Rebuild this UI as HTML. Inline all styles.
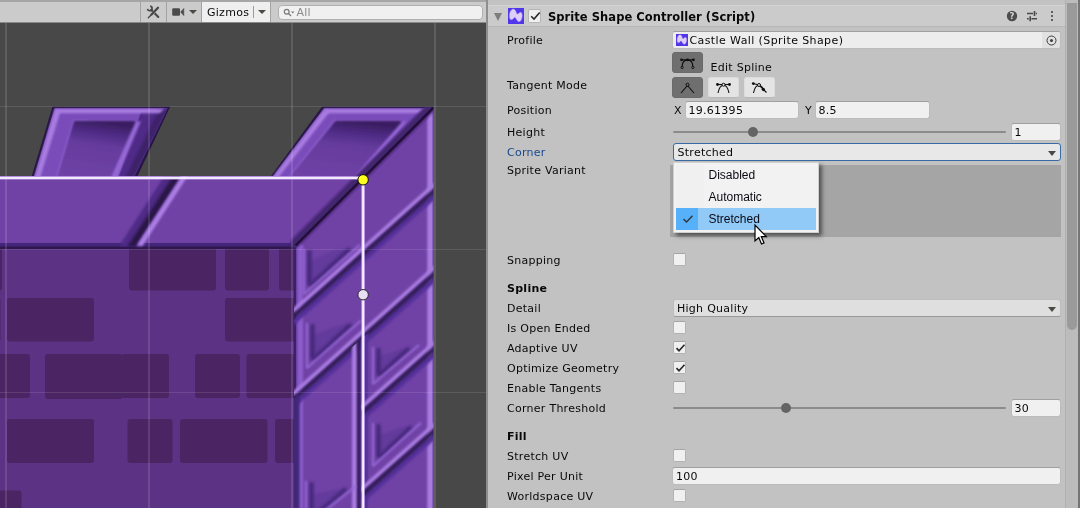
<!DOCTYPE html>
<html lang="en">
<head>
<meta charset="utf-8">
<title>Sprite Shape Controller</title>
<style>
*{box-sizing:border-box;margin:0;padding:0}
html,body{width:1080px;height:508px;overflow:hidden;background:#c2c2c2}
body{position:relative;font-family:"DejaVu Sans","Liberation Sans",sans-serif;font-size:11px;color:#090909;letter-spacing:0.27px;line-height:14px}
.abs{position:absolute}
/* left : scene view */
#left{will-change:transform;position:absolute;left:0;top:0;width:486px;height:508px;background:#484848;overflow:hidden}
#tbtop{position:absolute;left:0;top:0;width:486px;height:2px;background:#a6a6a6}
#toolbar{position:absolute;left:0;top:2px;width:486px;height:21px;background:#cbcbcb;border-bottom:1px solid #898989}
.sep{position:absolute;top:0;width:1px;height:20px;background:#a3a3a3}
#gizmos{position:absolute;left:202px;top:0;width:68px;height:20px;background:#efefef}
#gizmos span{position:absolute;left:5px;top:4px}
#search{position:absolute;left:278px;top:3px;width:205px;height:15px;background:#f0f0f0;border:1px solid #b0b0b0;border-radius:4px}
#search span{position:absolute;left:17.5px;top:0px;color:#8a8a8a;line-height:13px}
svg.scene{position:absolute;left:0;top:22px}
/* splitter */
#split{position:absolute;left:486px;top:0;width:2px;height:508px;background:#8e8e8e}
/* inspector */
#insp{will-change:transform;position:absolute;left:488px;top:0;width:592px;height:508px;background:#c2c2c2}
#hdr{position:absolute;left:0;top:5px;width:578px;height:22px;background:#cbcbcb;border-top:1px solid #d3d3d3;border-bottom:1px solid #b7b7b7}
.lbl{position:absolute;left:19px;white-space:nowrap;margin-top:1px}
.b{font-weight:bold}
.field{position:absolute;background:#f0f0f0;border:1px solid #bcbcbc;border-top-color:#a0a0a0;border-radius:3px;height:18px;line-height:18px;padding-left:3px;white-space:nowrap;overflow:hidden}
.cb{position:absolute;left:185px;width:13px;height:13px;background:#f0f0f0;border:1px solid #b2b2b2;border-top-color:#a5a5a5;border-radius:2px}
.track{position:absolute;left:185px;width:333px;height:2px;background:#8b8b8b;border-radius:1px}
.knob{position:absolute;width:10px;height:10px;border-radius:5px;background:#646464}
.btn{position:absolute;height:21px;width:31px;border-radius:3px}
.btn.dark{background:#6f6f6f;border:1px solid #6a6a6a}
.btn.light{background:#e4e4e4;border:1px solid #dcdcdc;border-bottom-color:#b9b9b9}
.drop{position:absolute;left:185px;width:388px;height:18px;background:#dfdfdf;border:1px solid #bdbdbd;border-bottom-color:#999;border-radius:3px;line-height:17px;padding-left:3px}
.arrow{position:absolute;width:0;height:0;border-left:4px solid transparent;border-right:4px solid transparent;border-top:5px solid #4a4a45}
.arrow.a4{border-left-width:4px;border-right-width:4px;border-top-width:4px}
/* popup */
#menu{position:absolute;left:185px;top:161.5px;width:146px;height:71px;background:#f2f2f2;border:1px solid #cfcfcf;box-shadow:3px 3px 4px rgba(0,0,0,0.5);font-family:"Liberation Sans",sans-serif;font-size:12px;letter-spacing:0;color:#0a0a14}
#menu .gut{position:absolute;left:2px;top:2px;width:28px;height:65px;background:#f0f0f0}
#menu .it{position:absolute;left:34.5px;line-height:14px}
#menu .sel{position:absolute;left:2px;top:45.5px;width:140px;height:22px;background:#91c9f7}
#menu .selchk{position:absolute;left:2px;top:45.5px;width:22px;height:22px;background:#56b0fa}
</style>
</head>
<body>
<div id="left">
<svg class="scene" width="486" height="486" viewBox="0 22 486 486">
<defs>
<filter id="b1" filterUnits="userSpaceOnUse" x="-10" y="0" width="520" height="540"><feGaussianBlur stdDeviation="0.9"/></filter>
<filter id="b2" filterUnits="userSpaceOnUse" x="-10" y="0" width="520" height="540"><feGaussianBlur stdDeviation="1.8"/></filter>
<filter id="bs" filterUnits="userSpaceOnUse" x="-10" y="0" width="520" height="540"><feGaussianBlur stdDeviation="0.55"/></filter>
<linearGradient id="rec" x1="0.55" y1="0" x2="0.35" y2="1"><stop offset="0" stop-color="#3a1e62"/><stop offset="0.18" stop-color="#4e2b84"/><stop offset="0.4" stop-color="#653b9d"/><stop offset="1" stop-color="#6f42a6"/></linearGradient>
<linearGradient id="recL" x1="0" y1="0" x2="1" y2="0"><stop offset="0" stop-color="#4a2a80"/><stop offset="0.5" stop-color="#6a3da0"/><stop offset="1" stop-color="#7042a6"/></linearGradient>
<clipPath id="colclip"><polygon points="433.5,106.5 433.5,510 294,510 294,243.5"/></clipPath>
<clipPath id="beamclip"><polygon points="-2,176 362,176 294,243.5 294,249 -2,249"/></clipPath>
</defs>
<rect x="0" y="22" width="486" height="486" fill="#484848"/>
<rect x="0" y="240" width="300" height="270" fill="#5c3285"/>
<rect x="129.0" y="245.0" width="87.0" height="45.5" rx="3" fill="#4b2463"/>
<rect x="225.0" y="245.0" width="44.0" height="45.5" rx="3" fill="#4b2463"/>
<rect x="279.0" y="245.0" width="17.0" height="45.5" rx="3" fill="#4b2463"/>
<rect x="-5.0" y="245.0" width="7.0" height="45.5" rx="3" fill="#4b2463"/>
<rect x="7.0" y="298.0" width="87.0" height="43.5" rx="3" fill="#4b2463"/>
<rect x="225.0" y="298.0" width="71.0" height="43.5" rx="3" fill="#4b2463"/>
<rect x="-5.0" y="298.0" width="5.5" height="43.5" rx="3" fill="#4b2463"/>
<rect x="-5.0" y="354.0" width="35.0" height="44.0" rx="3" fill="#4b2463"/>
<rect x="45.0" y="354.0" width="78.0" height="45.0" rx="3" fill="#4b2463"/>
<rect x="122.0" y="354.0" width="47.0" height="44.0" rx="3" fill="#4b2463"/>
<rect x="195.0" y="354.0" width="45.0" height="44.0" rx="3" fill="#4b2463"/>
<rect x="246.5" y="354.0" width="49.5" height="44.0" rx="3" fill="#4b2463"/>
<rect x="7.0" y="419.0" width="87.0" height="44.0" rx="3" fill="#4b2463"/>
<rect x="127.5" y="419.0" width="45.0" height="44.0" rx="3" fill="#4b2463"/>
<rect x="180.0" y="419.0" width="87.5" height="44.0" rx="3" fill="#4b2463"/>
<rect x="275.0" y="419.0" width="21.0" height="44.0" rx="3" fill="#4b2463"/>
<rect x="-5.0" y="490.5" width="26.5" height="49.5" rx="3" fill="#4b2463"/>
<polygon points="52.5,106.7 170.1,106.7 136.1,179.0 30.9,179.0" fill="#261243" filter="url(#bs)"/>
<polygon points="54.5,108.3 167.5,108.3 133.5,178.0 33.5,178.0" fill="#794cba" />
<polygon points="141.0,112.0 167.5,108.3 133.5,178.0 118.0,178.0" fill="#4f2c87" filter="url(#bs)"/>
<polygon points="158.5,110.3 167.0,108.8 133.0,178.0 125.5,178.0" fill="#3c2169" filter="url(#b1)"/>
<polygon points="55.5,109.1 164.5,109.1 159.5,113.3 56.5,113.3" fill="#a87be0" filter="url(#b1)"/>
<polygon points="55.0,109.3 60.5,111.3 40.0,178.0 34.5,178.0" fill="#a87be0" filter="url(#b1)"/>
<polyline points="57.0,178.0 74.0,121.0 135.0,121.0" fill="none" stroke="#9a6cd8" stroke-width="2" stroke-linejoin="round" filter="url(#b1)"/>
<polygon points="135.0,122.0 141.0,121.0 117.0,178.0 110.0,178.0" fill="#9468d4" filter="url(#b1)"/>
<polygon points="75.0,122.0 134.0,122.0 109.0,178.0 58.0,178.0" fill="url(#rec)" filter="url(#b1)" stroke="url(#rec)" stroke-width="2.500" stroke-linejoin="round"/>
<g clip-path="url(#cmclip)">
<clipPath id="cmclip"><polygon points="260,100 436,100 433.5,106.5 360.5,178 260,178"/></clipPath>
<polygon points="322.0,106.7 442.6,106.7 374.6,179.0 268.9,179.0" fill="#261243" filter="url(#bs)"/>
<polygon points="324.0,108.3 440.0,108.3 372.0,178.0 271.5,178.0" fill="#794cba" />
<polygon points="325.0,109.1 437.0,109.1 432.0,113.3 326.0,113.3" fill="#a87be0" filter="url(#b1)"/>
<polygon points="324.5,109.3 330.0,111.3 278.0,178.0 272.5,178.0" fill="#a87be0" filter="url(#b1)"/>
<polyline points="289.0,178.0 335.0,121.0 401.0,121.0" fill="none" stroke="#9a6cd8" stroke-width="2" stroke-linejoin="round" filter="url(#b1)"/>
<polygon points="401.0,122.0 407.0,121.0 359.0,178.0 352.0,178.0" fill="#9468d4" filter="url(#b1)"/>
<polygon points="336.0,122.0 400.0,122.0 351.0,178.0 290.0,178.0" fill="url(#rec)" filter="url(#b1)" stroke="url(#rec)" stroke-width="2.500" stroke-linejoin="round"/>
</g>
<g clip-path="url(#beamclip)">
<rect x="-2" y="176" width="370" height="74" fill="#7042a6"/>
<rect x="-2" y="243" width="370" height="6" fill="#43257a"/>
<rect x="-2" y="246.5" width="370" height="2.5" fill="#30184f"/>
<polygon points="164.3,176.0 174.3,176.0 129.1,246.0 119.1,246.0" fill="#4f2c86" filter="url(#b1)"/>
<polygon points="172.8,176.0 181.3,176.0 136.1,246.0 127.6,246.0" fill="#2a1548" filter="url(#b1)"/>
<polygon points="181.8,176.0 187.8,176.0 142.6,246.0 136.6,246.0" fill="#ab7ee4" filter="url(#b1)"/>
</g>
<g clip-path="url(#colclip)">
<rect x="290" y="100" width="146" height="420" fill="#7042a6"/>
<rect x="293" y="240" width="3.2" height="270" fill="#3a1f66"/>
<rect x="297.5" y="244" width="5.5" height="270" fill="#9163d2" filter="url(#b1)" opacity="0.85"/>
<rect x="427.3" y="100" width="6.5" height="420" fill="#a87be0" filter="url(#b1)"/>
<rect x="432.6" y="100" width="1.2" height="420" fill="#5a3394" opacity="0.8"/>
<polygon points="308.0,262.0 308.0,288.0 354.0,247.5 335.6,249.5" fill="#643a9c" filter="url(#b2)"/>
<line x1="309.5" y1="250.0" x2="309.5" y2="285.0" stroke="#43257a" stroke-width="4.2" filter="url(#b2)"/>
<line x1="310.0" y1="285.5" x2="350.0" y2="248.5" stroke="#45267c" stroke-width="4.0" filter="url(#b2)"/>
<line x1="304.0" y1="249.0" x2="304.0" y2="294.0" stroke="#9669d6" stroke-width="2.0" filter="url(#b1)"/>
<line x1="304.0" y1="294.0" x2="360.0" y2="244.7" stroke="#9669d6" stroke-width="2.0" filter="url(#b1)"/>
<line x1="444.8" y1="187.2" x2="287.9" y2="327.2" stroke="#55309a" stroke-width="5.0" filter="url(#b1)"/>
<line x1="439.1" y1="180.8" x2="282.2" y2="320.8" stroke="#a87be0" stroke-width="4.4" filter="url(#b1)"/>
<line x1="442.0" y1="184.0" x2="285.0" y2="324.0" stroke="#321a58" stroke-width="4.4" filter="url(#b1)"/>
<polygon points="311.0,336.0 311.0,362.0 355.0,323.3 337.4,325.3" fill="#643a9c" filter="url(#b2)"/>
<line x1="312.5" y1="324.0" x2="312.5" y2="359.0" stroke="#43257a" stroke-width="4.2" filter="url(#b2)"/>
<line x1="313.0" y1="359.5" x2="351.0" y2="324.3" stroke="#45267c" stroke-width="4.0" filter="url(#b2)"/>
<line x1="307.0" y1="323.0" x2="307.0" y2="368.0" stroke="#9669d6" stroke-width="2.0" filter="url(#b1)"/>
<line x1="307.0" y1="368.0" x2="361.0" y2="320.5" stroke="#9669d6" stroke-width="2.0" filter="url(#b1)"/>
<line x1="444.8" y1="270.2" x2="287.9" y2="410.2" stroke="#55309a" stroke-width="5.0" filter="url(#b1)"/>
<line x1="439.1" y1="263.8" x2="282.2" y2="403.8" stroke="#a87be0" stroke-width="4.4" filter="url(#b1)"/>
<line x1="442.0" y1="267.0" x2="285.0" y2="407.0" stroke="#321a58" stroke-width="4.4" filter="url(#b1)"/>
<clipPath id="lowclip"><polygon points="294,399 363,337.500 433,275 433,510 294,510"/></clipPath>
<g clip-path="url(#lowclip)">
<rect x="292" y="300" width="7.500" height="220" fill="#43257a" filter="url(#b1)"/>
<rect x="352" y="300" width="5" height="220" fill="#a87be0" filter="url(#b1)"/>
<rect x="357.2" y="300" width="3.6" height="220" fill="#321a58" filter="url(#b1)"/>
<rect x="361" y="300" width="7" height="220" fill="#55309a" filter="url(#b1)"/>
</g>
<clipPath id="rhalf"><rect x="361" y="250" width="73" height="260"/></clipPath>
<g clip-path="url(#rhalf)">
<polygon points="377.0,357.2 377.0,378.0 413.0,347.4 398.6,349.4" fill="#643a9c" filter="url(#b2)"/>
<line x1="378.5" y1="348.0" x2="378.5" y2="375.0" stroke="#43257a" stroke-width="4.2" filter="url(#b2)"/>
<line x1="379.0" y1="375.5" x2="409.0" y2="348.3" stroke="#45267c" stroke-width="4.0" filter="url(#b2)"/>
<line x1="373.0" y1="347.0" x2="373.0" y2="384.0" stroke="#9669d6" stroke-width="2.0" filter="url(#b1)"/>
<line x1="373.0" y1="384.0" x2="419.0" y2="344.9" stroke="#9669d6" stroke-width="2.0" filter="url(#b1)"/>
<line x1="444.8" y1="345.3" x2="356.9" y2="423.2" stroke="#55309a" stroke-width="5.0" filter="url(#b1)"/>
<line x1="439.1" y1="338.8" x2="351.2" y2="416.7" stroke="#a87be0" stroke-width="4.4" filter="url(#b1)"/>
<line x1="442.0" y1="342.0" x2="354.0" y2="420.0" stroke="#321a58" stroke-width="4.4" filter="url(#b1)"/>
<polygon points="377.0,435.3 377.0,460.0 415.0,425.8 399.8,427.8" fill="#643a9c" filter="url(#b2)"/>
<line x1="378.5" y1="424.0" x2="378.5" y2="457.0" stroke="#43257a" stroke-width="4.2" filter="url(#b2)"/>
<line x1="379.0" y1="457.5" x2="411.0" y2="426.9" stroke="#45267c" stroke-width="4.0" filter="url(#b2)"/>
<line x1="373.0" y1="423.0" x2="373.0" y2="466.0" stroke="#9669d6" stroke-width="2.0" filter="url(#b1)"/>
<line x1="373.0" y1="466.0" x2="421.0" y2="422.8" stroke="#9669d6" stroke-width="2.0" filter="url(#b1)"/>
<line x1="444.8" y1="427.3" x2="356.9" y2="505.2" stroke="#55309a" stroke-width="5.0" filter="url(#b1)"/>
<line x1="439.1" y1="420.8" x2="351.2" y2="498.7" stroke="#a87be0" stroke-width="4.4" filter="url(#b1)"/>
<line x1="442.0" y1="424.0" x2="354.0" y2="502.0" stroke="#321a58" stroke-width="4.4" filter="url(#b1)"/>
</g>
<clipPath id="lhalf"><rect x="294" y="380" width="64.500" height="130"/></clipPath>
<g clip-path="url(#lhalf)">
<polygon points="310.0,494.0 310.0,520.0 350.0,488.0 334.0,490.0" fill="#643a9c" filter="url(#b2)"/>
<line x1="311.5" y1="482.0" x2="311.5" y2="517.0" stroke="#43257a" stroke-width="4.2" filter="url(#b2)"/>
<line x1="312.0" y1="517.5" x2="346.0" y2="488.7" stroke="#45267c" stroke-width="4.0" filter="url(#b2)"/>
<line x1="306.0" y1="481.0" x2="306.0" y2="526.0" stroke="#9669d6" stroke-width="2.0" filter="url(#b1)"/>
<line x1="306.0" y1="526.0" x2="356.0" y2="486.0" stroke="#9669d6" stroke-width="2.0" filter="url(#b1)"/>
</g>
</g>
<clipPath id="spclip"><rect x="0" y="107" width="433.500" height="420"/></clipPath><g clip-path="url(#spclip)">
<line x1="443.6" y1="94.6" x2="295.1" y2="243.1" stroke="#43256f" stroke-width="9.5" filter="url(#b1)" stroke-linecap="round"/>
<line x1="445.0" y1="96.0" x2="295.5" y2="245.5" stroke="#221038" stroke-width="2.4" filter="url(#bs)"/>
</g>
<rect x="5.0" y="22" width="2" height="486" fill="#fff" opacity="0.12"/>
<rect x="148.0" y="22" width="2" height="486" fill="#fff" opacity="0.12"/>
<rect x="291.0" y="22" width="2" height="486" fill="#fff" opacity="0.12"/>
<rect x="434.0" y="22" width="2" height="486" fill="#fff" opacity="0.12"/>
<rect x="0" y="106.0" width="486" height="1" fill="#fff" opacity="0.11"/>
<rect x="0" y="249.0" width="486" height="1" fill="#fff" opacity="0.11"/>
<rect x="0" y="392.0" width="486" height="1" fill="#fff" opacity="0.11"/>
<g filter="url(#b0)">
<filter id="b0"><feGaussianBlur stdDeviation="0.45"/></filter>
<path d="M-2 177.9 H363.1 V512" fill="none" stroke="#dcbcff" stroke-width="3.4" opacity="0.85"/>
<path d="M-2 177.9 H363.1 V512" fill="none" stroke="#ffffff" stroke-width="1.5"/>
</g>
<circle cx="363.1" cy="179.8" r="5.2" fill="#ffff1e" stroke="#0a0a0a" stroke-width="1"/>
<circle cx="363.1" cy="294.7" r="5.2" fill="#e8def6" stroke="#2b2b2b" stroke-width="1"/>
</svg>
<div id="tbtop"></div>
<div id="toolbar">
  <div class="sep" style="left:140px"></div>
  <div class="sep" style="left:166px"></div>
  <div class="sep" style="left:201px"></div>
  <div id="gizmos"><span>Gizmos</span>
    <div class="abs" style="left:51px;top:4px;width:1px;height:12px;background:#9a9a9a"></div>
    <div class="arrow a4" style="left:55.500px;top:8px"></div>
  </div>
  <div class="sep" style="left:270px"></div>
  <!-- tools icon -->
  <svg class="abs" style="left:145px;top:3px" width="16" height="16" viewBox="0 0 16 16"><g stroke="#484848" fill="none"><path d="M6.200 4.800 L13.300 12" stroke-width="2.100" stroke-linecap="round"/><path d="M5.200 1.200 A2.300 2.300 0 1 1 2.500 3.900" stroke-width="1.700"/><path d="M13.100 2.700 L6.800 9.300" stroke-width="2.500" stroke="#cbcbcb" /><path d="M13 2.800 L6.500 9.500" stroke-width="2.300" stroke-linecap="round"/><path d="M6.800 9.200 L3.300 12.700" stroke-width="1.300" stroke-linecap="round"/></g></svg>
  <!-- camera icon -->
  <svg class="abs" style="left:172px;top:6px" width="14" height="9" viewBox="0 0 14 9"><rect x="0.200" y="0.300" width="7.800" height="7.500" rx="1.200" fill="#4b4b4b"/><path d="M8.600 4 L11.800 0.500 V7.600 Z" fill="#4b4b4b" stroke="#4b4b4b" stroke-width="0.600" stroke-linejoin="round"/></svg>
  <div class="arrow a4" style="left:189px;top:8px"></div>
  <div id="search"><svg class="abs" style="left:3.5px;top:2px" width="12" height="10" viewBox="0 0 12 10"><circle cx="3.7" cy="3.7" r="2.4" fill="none" stroke="#7a7a7a" stroke-width="1.2"/><path d="M5.5 5.5 L8 8" stroke="#7a7a7a" stroke-width="1.3"/><path d="M8 3.5 h3.4 l-1.7 2z" fill="#7a7a7a"/></svg><span>All</span></div>
</div>
</div>
<div id="split"></div>
<div id="insp">
  <div id="hdr"></div>
  <!-- scrollbar -->
  <div class="abs" style="left:577px;top:0;width:1px;height:508px;background:#b0b0b0"></div>
  <div class="abs" style="left:578px;top:0;width:12px;height:508px;background:#bcbcbc"></div>
  <div class="abs" style="left:579px;top:3px;width:10px;height:327px;background:#9a9a9a;border-radius:0 0 5px 5px"></div>
  <div class="abs" style="left:590px;top:0;width:2px;height:508px;background:#757575"></div>

  <!-- header -->
  <div class="abs" style="left:6px;top:13px;width:0;height:0;border-left:4.5px solid transparent;border-right:4.5px solid transparent;border-top:8px solid #7e7e7e"></div>
  <svg class="abs" style="left:20px;top:8px" width="16" height="16" viewBox="0 0 16 16"><rect width="16" height="16" fill="#5237ea"/><path d="M1.400 7 C1.600 3.500 3.800 0.800 5.400 1 C6.600 1.100 7.400 2.200 7.900 3.300 C8.400 4.600 8.700 6.100 9.600 6.100 C10.400 6.100 11.300 4.200 12.600 4.300 C14.200 4.500 14.500 7 14.200 8.800 C13.800 11.500 12.600 13.900 11 13.700 C9.600 13.500 8.800 12 8.200 10.900 C7.700 10 7.200 9.300 6.500 9.400 C5.600 9.500 4.900 11.900 3.400 11.800 C2 11.700 1.200 9.800 1.400 7Z" fill="#ddcff8" stroke="#9c86f0" stroke-width="0.500"/></svg>
  <div class="abs" style="left:40px;top:9px;width:13px;height:14px;background:#f1f1f1;border:1px solid #b5b5b5;border-radius:2px"></div>
  <svg class="abs" style="left:41.500px;top:11px" width="11" height="10" viewBox="0 0 11 10"><path d="M1.2 5.2 L4 8 L9.7 1.5" fill="none" stroke="#2b2b2b" stroke-width="1.6"/></svg>
  <div class="lbl b" style="left:60px;top:8.500px;font-size:11.5px;letter-spacing:0.05px">Sprite Shape Controller (Script)</div>
  <!-- header icons -->
  <svg class="abs" style="left:518px;top:10px" width="12" height="12" viewBox="0 0 12 12"><circle cx="6" cy="6" r="5.2" fill="#4d4d4d"/><text x="6" y="9.300" font-family="DejaVu Sans, sans-serif" font-weight="bold" font-size="8.500" fill="#d4d4d4" text-anchor="middle">?</text></svg>
  <svg class="abs" style="left:538px;top:10px" width="12" height="12" viewBox="0 0 12 12"><g stroke="#4a4a4a" stroke-width="1.600" fill="none"><path d="M1 3.500H7.200M9.800 3.500H11"/><path d="M8.500 1V6"/><path d="M1 8.700H2.800M5.400 8.700H11"/><path d="M4.200 6.200V11.200"/></g></svg>
  <div class="abs" style="left:562.700px;top:10.600px;width:2.600px;height:2.600px;border-radius:0.800px;background:#4a4a4a"></div>
  <div class="abs" style="left:562.700px;top:14.700px;width:2.600px;height:2.600px;border-radius:0.800px;background:#4a4a4a"></div>
  <div class="abs" style="left:562.700px;top:18.800px;width:2.600px;height:2.600px;border-radius:0.800px;background:#4a4a4a"></div>

  <!-- Profile -->
  <div class="lbl" style="top:33px">Profile</div>
  <div class="field" style="left:184px;top:31px;width:389px;padding-left:16.500px;letter-spacing:0.4px;background:#ededed">Castle Wall (Sprite Shape)
    <div class="abs" style="right:0;top:0;width:18px;height:16px;background:#e1e1e1"></div>
    <svg class="abs" style="right:3.500px;top:2.500px" width="11" height="11" viewBox="0 0 11 11"><circle cx="5.5" cy="5.5" r="4.500" fill="none" stroke="#3e3e3e" stroke-width="1"/><circle cx="5.5" cy="5.5" r="1.5" fill="#3e3e3e"/></svg>
  </div>
  <svg class="abs" style="left:188px;top:34px" width="12" height="12" viewBox="0 0 16 16"><rect width="16" height="16" fill="#5237ea"/><path d="M1.400 7 C1.600 3.500 3.800 0.800 5.400 1 C6.600 1.100 7.400 2.200 7.900 3.300 C8.400 4.600 8.700 6.100 9.600 6.100 C10.400 6.100 11.300 4.200 12.600 4.300 C14.200 4.500 14.500 7 14.200 8.800 C13.800 11.500 12.600 13.900 11 13.700 C9.600 13.500 8.800 12 8.200 10.900 C7.700 10 7.200 9.300 6.500 9.400 C5.600 9.500 4.900 11.900 3.400 11.800 C2 11.700 1.200 9.800 1.400 7Z" fill="#ddcff8" stroke="#9c86f0" stroke-width="0.500"/></svg>

  <!-- Edit spline -->
  <div class="btn dark" style="left:184px;top:52px"></div>
  <svg class="abs" style="left:190.700px;top:57px" width="17" height="12.500" viewBox="0 0 19 14"><g fill="none" stroke="#0d0d0d" stroke-width="1.2"><path d="M3.500 11.500 C3.500 6 6 3.200 9.500 3.200 C13 3.200 15.500 6 15.500 11.500"/><path d="M3 3.200H16"/></g><circle cx="2.800" cy="3.200" r="1.500" fill="#0d0d0d"/><circle cx="9.500" cy="3.200" r="1.600" fill="#0d0d0d"/><circle cx="16.200" cy="3.200" r="1.500" fill="#0d0d0d"/><circle cx="3.500" cy="11.700" r="1.300" fill="#6f6f6f" stroke="#0d0d0d"/><circle cx="15.500" cy="11.700" r="1.300" fill="#6f6f6f" stroke="#0d0d0d"/></svg>
  <div class="lbl" style="left:222.500px;top:59.500px">Edit Spline</div>

  <!-- Tangent mode -->
  <div class="lbl" style="top:78px">Tangent Mode</div>
  <div class="btn dark" style="left:184px;top:77px"></div>
  <div class="btn light" style="left:220px;top:77px"></div>
  <div class="btn light" style="left:256px;top:77px"></div>
  <svg class="abs" style="left:190.500px;top:81px" width="17" height="14" viewBox="0 0 17 14"><path d="M2 12 L8.500 4.500 L15 12" fill="none" stroke="#0d0d0d" stroke-width="1.100"/><circle cx="8.500" cy="3.700" r="1.500" fill="#6f6f6f" stroke="#0d0d0d"/></svg>
  <svg class="abs" style="left:226.500px;top:81px" width="17" height="14" viewBox="0 0 17 14"><g fill="none" stroke="#0d0d0d" stroke-width="1.100"><path d="M3 12 C4 7 6 4.200 8.500 4.200 C11 4.200 13 7 14 12"/><path d="M2.500 3.500 H14.500"/></g><circle cx="2.500" cy="3.500" r="1.400" fill="#0d0d0d"/><circle cx="14.500" cy="3.500" r="1.400" fill="#0d0d0d"/><circle cx="8.500" cy="3.700" r="1.500" fill="#e4e4e4" stroke="#0d0d0d"/></svg>
  <svg class="abs" style="left:262.500px;top:81px" width="17" height="14" viewBox="0 0 17 14"><g fill="none" stroke="#0d0d0d" stroke-width="1.100"><path d="M2.500 12 C3.500 7 5.500 4.200 8 4.200 C10.500 4.200 12 7 13 10"/><path d="M2 2.500 L8 4 L15.500 11.500"/></g><circle cx="2.300" cy="2.600" r="1.400" fill="#0d0d0d"/><circle cx="12.300" cy="8.300" r="1.600" fill="#0d0d0d"/><circle cx="8" cy="4" r="1.500" fill="#e4e4e4" stroke="#0d0d0d"/></svg>

  <!-- Position -->
  <div class="lbl" style="top:103px">Position</div>
  <div class="lbl" style="left:186px;top:103px">X</div>
  <div class="field" style="left:196.5px;top:101px;width:114.5px">19.61395</div>
  <div class="lbl" style="left:317px;top:103px">Y</div>
  <div class="field" style="left:326.5px;top:101px;width:115px">8.5</div>

  <!-- Height -->
  <div class="lbl" style="top:125px">Height</div>
  <div class="track" style="top:131px"></div>
  <div class="knob" style="left:260px;top:127px"></div>
  <div class="field" style="left:522.5px;top:123px;width:50px">1</div>

  <!-- Corner -->
  <div class="lbl" style="top:145px;color:#17488f">Corner</div>
  <div class="drop" style="top:143px;height:18px;background:#e8e8e8;border:1px solid #3a6aa3;padding-left:3.500px">Stretched<div class="arrow" style="left:374px;top:6.500px"></div></div>

  <!-- Sprite Variant -->
  <div class="lbl" style="top:163px">Sprite Variant</div>
  <div class="abs" style="left:182px;top:165px;width:391px;height:71.5px;background:#a5a5a5"></div>

  <!-- popup menu -->
  <div id="menu">
    <div class="gut"></div>
    <div class="sel"></div><div class="selchk"></div>
    <div class="it" style="top:5.500px">Disabled</div>
    <div class="it" style="top:27.500px">Automatic</div>
    <div class="it" style="top:49.500px">Stretched</div>
    <svg class="abs" style="left:8px;top:51px" width="12" height="10" viewBox="0 0 12 10"><path d="M1.500 5 L4.500 8 L10.500 1.800" fill="none" stroke="#333" stroke-width="1.300"/></svg>
  </div>
  <!-- cursor -->
  <svg class="abs" style="left:266px;top:224px" width="14" height="22" viewBox="0 0 14 22"><path d="M1 1 V17 L4.800 13.500 L7.500 20 L10 19 L7.300 12.600 H12.300 Z" fill="#fff" stroke="#000" stroke-width="1.200" stroke-linejoin="miter"/></svg>

  <!-- Snapping -->
  <div class="lbl" style="top:253px">Snapping</div>
  <div class="cb" style="top:253px"></div>

  <div class="lbl b" style="top:281px;font-size:11px">Spline</div>
  <div class="lbl" style="top:301px">Detail</div>
  <div class="drop" style="top:299px">High Quality<div class="arrow" style="left:374px;top:6.500px"></div></div>
  <div class="lbl" style="top:321px">Is Open Ended</div>
  <div class="cb" style="top:321px"></div>
  <div class="lbl" style="top:341px">Adaptive UV</div>
  <div class="cb" style="top:341px"><svg class="abs" style="left:0.500px;top:1px" width="11" height="10" viewBox="0 0 11 10"><path d="M1.500 5.200 L4 7.800 L9.500 1.800" fill="none" stroke="#2b2b2b" stroke-width="1.700"/></svg></div>
  <div class="lbl" style="top:361px">Optimize Geometry</div>
  <div class="cb" style="top:361px"><svg class="abs" style="left:0.500px;top:1px" width="11" height="10" viewBox="0 0 11 10"><path d="M1.500 5.200 L4 7.800 L9.500 1.800" fill="none" stroke="#2b2b2b" stroke-width="1.700"/></svg></div>
  <div class="lbl" style="top:381px">Enable Tangents</div>
  <div class="cb" style="top:381px"></div>
  <div class="lbl" style="top:401px">Corner Threshold</div>
  <div class="track" style="top:407px"></div>
  <div class="knob" style="left:293px;top:403px"></div>
  <div class="field" style="left:522.5px;top:399px;width:50px">30</div>

  <div class="lbl b" style="top:429px;font-size:11px">Fill</div>
  <div class="lbl" style="top:449px">Stretch UV</div>
  <div class="cb" style="top:449px"></div>
  <div class="lbl" style="top:469px">Pixel Per Unit</div>
  <div class="field" style="left:184px;top:467px;width:389px">100</div>
  <div class="lbl" style="top:489px">Worldspace UV</div>
  <div class="cb" style="top:489px"></div>
</div>
</body>
</html>
